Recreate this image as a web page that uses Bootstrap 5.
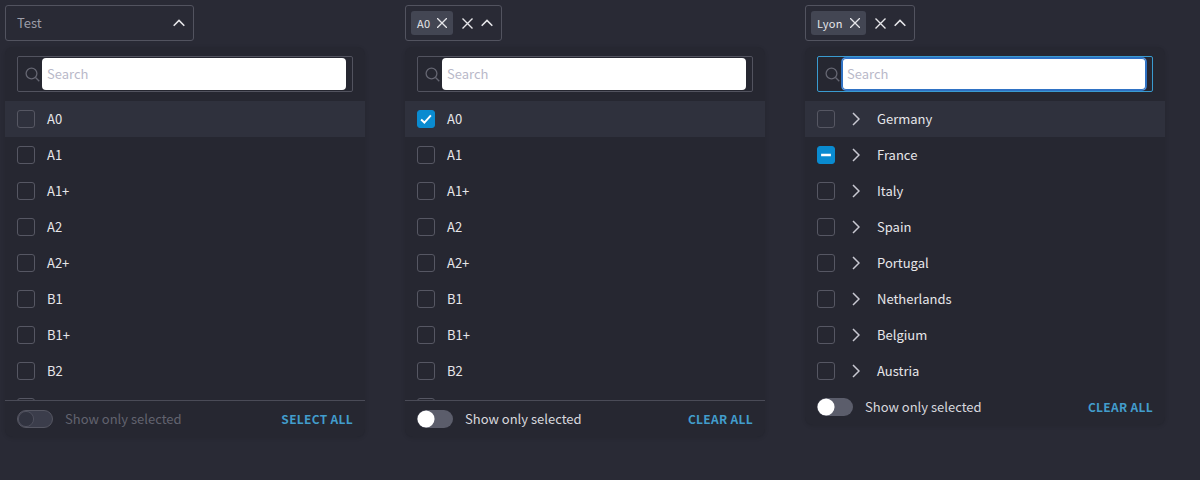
<!DOCTYPE html>
<html>

<head>
  <title>Multi select</title>
  <link href="https://cdn.jsdelivr.net/npm/bootstrap@5.3.2/dist/css/bootstrap.min.css" rel="stylesheet">
  <script src="https://cdn.jsdelivr.net/npm/bootstrap@5.3.2/dist/js/bootstrap.bundle.min.js"></script>
  <style>
    html, body { height: 100%; overflow: hidden; }
    body {
      background: #292a35;
      color: #e6e6ea;
      font-family: "Noto Sans CJK SC", "Noto Sans", sans-serif;
      font-size: 13px;
      padding: 5px;
    }
    .picker-wrap { gap: 40px; }
    .picker-col { width: 360px; }
    .picker-trigger {
      height: 36px;
      border: 1px solid #52535f;
      border-radius: 3px;
      padding: 0 8px 0 5px;
      color: #9c9da8;
    }
    .picker-trigger.is-empty { width: 189px; padding-left: 11px; }
    .picker-chip {
      height: 24px;
      background: #434653;
      color: #e6e6ea;
      border-radius: 3px;
      font-size: 11px;
      letter-spacing: .3px;
      padding: 0 6px;
      margin-right: 9px;
      gap: 7px;
    }
    .picker-panel {
      margin-top: 6px;
      background: #262731;
      border-radius: 8px;
      box-shadow: 0 1px 4px rgba(0, 0, 0, .12);
      overflow: hidden;
    }
    .picker-search {
      height: 36px;
      margin: 9px 12px;
      border: 1px solid #52535f;
      border-radius: 2px;
      padding: 1px 6px 1px 7px;
    }
    .picker-search .form-control {
      height: 32px;
      margin-left: 2px;
      padding: 0 5px 2px;
      border: 0;
      border-radius: 4px;
      font-size: 13px;
    }
    .picker-search .form-control::placeholder { color: #b9b9c9; opacity: 1; }
    .picker-search.is-focused { border-color: #3a9bd0; }
    .picker-search.is-focused .form-control { box-shadow: 0 0 0 1px #2f72c4, inset 0 0 0 1px #2f72c4; }
    .picker-list { height: 299px; overflow: hidden; }
    .picker-list.is-short { height: 288px; }
    .picker-row { height: 36px; padding: 0 12px; }
    .picker-row.is-hover { background: #2f313d; }
    .picker-row .form-check-input {
      width: 18px;
      height: 18px;
      margin: 0 12px 0 0;
      background-color: transparent;
      border: 1px solid #565763;
      border-radius: 3px;
      flex-shrink: 0;
    }
    .picker-row .form-check-input:checked {
      background-color: #0a8bd0;
      border-color: #0a8bd0;
      background-image: url("data:image/svg+xml,%3csvg xmlns='http://www.w3.org/2000/svg' viewBox='0 0 18 18'%3e%3cpath fill='none' stroke='%23fff' stroke-width='2.2' d='m3.5 9.5 3.7 3.5 7.3-8'/%3e%3c/svg%3e");
    }
    .picker-row .form-check-input:indeterminate {
      background-color: #0a8bd0;
      border-color: #0a8bd0;
      background-image: url("data:image/svg+xml,%3csvg xmlns='http://www.w3.org/2000/svg' viewBox='0 0 18 18'%3e%3cpath stroke='%23fff' stroke-width='3' d='M3.5 9h11'/%3e%3c/svg%3e");
    }
    .picker-arrow { width: 30px; flex-shrink: 0; padding-left: 5px; }
    .picker-foot { height: 37px; padding: 0 12px; border-top: 1px solid #4a4b57; }
    .picker-foot.no-line { height: 36px; border-top: 0; }
    .picker-foot .form-check-input {
      width: 36px;
      height: 18px;
      margin: 0 12px 0 0;
      background-color: #5b5d6b;
      border: 0;
      background-image: url("data:image/svg+xml,%3csvg xmlns='http://www.w3.org/2000/svg' viewBox='-4 -4 8 8'%3e%3ccircle r='3.8' fill='%23fff'/%3e%3c/svg%3e");
    }
    .picker-foot .form-check-input:disabled {
      opacity: 1;
      background-color: #3b3d4b;
      border: 1px solid #565763;
      background-image: url("data:image/svg+xml,%3csvg xmlns='http://www.w3.org/2000/svg' viewBox='-4 -4 8 8'%3e%3ccircle r='3.8' fill='%23313340' stroke='%23565763' stroke-width='.4'/%3e%3c/svg%3e");
    }
    .picker-foot .form-check-label { opacity: 1; color: #d8d8de; }
    .picker-foot .form-check-input:disabled ~ .form-check-label { opacity: 1; color: #62636f; }
    .picker-action {
      color: #429dcc;
      font-weight: 600;
      font-size: 12px;
      letter-spacing: .3px;
      text-decoration: none;
    }
  </style>
</head>

<body>
  <div class="d-flex picker-wrap">

    <section class="picker-col">
      <div class="picker-trigger is-empty d-flex align-items-center justify-content-between">
        <span>Test</span>
        <svg width="12" height="8" viewBox="0 0 12 8" fill="none" stroke="#e6e6ea" stroke-width="1.6"><path d="M.7 6.7 6 1.4l5.3 5.3"/></svg>
      </div>
      <div class="picker-panel">
        <div class="picker-search d-flex align-items-center">
          <svg width="15" height="15" viewBox="0 0 15 15" fill="none" stroke="#656672" stroke-width="1.3" class="flex-shrink-0"><circle cx="6.5" cy="6.5" r="5.4"/><path d="m10.5 10.5 3.8 3.8"/></svg>
          <input type="text" class="form-control" placeholder="Search">
        </div>
        <div class="picker-list" id="listOne"></div>
        <div class="picker-foot d-flex align-items-center justify-content-between">
          <div class="form-check form-switch d-flex align-items-center p-0 m-0">
            <input class="form-check-input" type="checkbox" id="onlyOne" disabled>
            <label class="form-check-label" for="onlyOne">Show only selected</label>
          </div>
          <a href="#" class="picker-action">SELECT ALL</a>
        </div>
      </div>
    </section>

    <section class="picker-col">
      <div class="picker-trigger d-inline-flex align-items-center">
        <span class="picker-chip d-inline-flex align-items-center">A0
          <svg width="10" height="10" viewBox="0 0 10 10" stroke="#e6e6ea" stroke-width="1.3"><path d="m0 0 10 10M10 0 0 10"/></svg>
        </span>
        <svg width="11" height="11" viewBox="0 0 11 11" stroke="#e6e6ea" stroke-width="1.4" class="me-2"><path d="m.5.5 10 10M10.500.5l-10 10"/></svg>
        <svg width="12" height="8" viewBox="0 0 12 8" fill="none" stroke="#e6e6ea" stroke-width="1.6"><path d="M.7 6.7 6 1.4l5.3 5.3"/></svg>
      </div>
      <div class="picker-panel">
        <div class="picker-search d-flex align-items-center">
          <svg width="15" height="15" viewBox="0 0 15 15" fill="none" stroke="#656672" stroke-width="1.3" class="flex-shrink-0"><circle cx="6.5" cy="6.5" r="5.4"/><path d="m10.5 10.5 3.8 3.8"/></svg>
          <input type="text" class="form-control" placeholder="Search">
        </div>
        <div class="picker-list" id="listTwo"></div>
        <div class="picker-foot d-flex align-items-center justify-content-between">
          <div class="form-check form-switch d-flex align-items-center p-0 m-0">
            <input class="form-check-input" type="checkbox" id="onlyTwo">
            <label class="form-check-label" for="onlyTwo">Show only selected</label>
          </div>
          <a href="#" class="picker-action">CLEAR ALL</a>
        </div>
      </div>
    </section>

    <section class="picker-col">
      <div class="picker-trigger d-inline-flex align-items-center">
        <span class="picker-chip d-inline-flex align-items-center">Lyon
          <svg width="10" height="10" viewBox="0 0 10 10" stroke="#e6e6ea" stroke-width="1.3"><path d="m0 0 10 10M10 0 0 10"/></svg>
        </span>
        <svg width="11" height="11" viewBox="0 0 11 11" stroke="#e6e6ea" stroke-width="1.4" class="me-2"><path d="m.5.5 10 10M10.500.5l-10 10"/></svg>
        <svg width="12" height="8" viewBox="0 0 12 8" fill="none" stroke="#e6e6ea" stroke-width="1.6"><path d="M.7 6.7 6 1.4l5.3 5.3"/></svg>
      </div>
      <div class="picker-panel">
        <div class="picker-search is-focused d-flex align-items-center">
          <svg width="15" height="15" viewBox="0 0 15 15" fill="none" stroke="#656672" stroke-width="1.3" class="flex-shrink-0"><circle cx="6.5" cy="6.5" r="5.4"/><path d="m10.5 10.5 3.8 3.8"/></svg>
          <input type="text" class="form-control" placeholder="Search">
        </div>
        <div class="picker-list is-short" id="listThree"></div>
        <div class="picker-foot no-line d-flex align-items-center justify-content-between">
          <div class="form-check form-switch d-flex align-items-center p-0 m-0">
            <input class="form-check-input" type="checkbox" id="onlyThree">
            <label class="form-check-label" for="onlyThree">Show only selected</label>
          </div>
          <a href="#" class="picker-action">CLEAR ALL</a>
        </div>
      </div>
    </section>

  </div>

  <script>
    // last row is cut off by the footer, only the top of its box shows
    const levels = ["A0", "A1", "A1+", "A2", "A2+", "B1", "B1+", "B2", ""]
    const countries = ["Germany", "France", "Italy", "Spain", "Portugal", "Netherlands", "Belgium", "Austria"]
    const arrow = '<span class="picker-arrow d-flex"><svg width="8" height="14" viewBox="0 0 8 14" fill="none" stroke="#c9c9d2" stroke-width="1.5"><path d="m1 1 6 6-6 6"/></svg></span>'

    function fillList(id, names, checkedName, halfName, withArrow) {
      const list = document.querySelector(id)
      for (let i = 0; i < names.length; i++) {
        const row = document.createElement("div")
        row.className = "picker-row d-flex align-items-center"
        if (i === 0) row.classList.add("is-hover")

        const box = document.createElement("input")
        box.type = "checkbox"
        box.className = "form-check-input"
        box.checked = names[i] === checkedName
        box.indeterminate = names[i] === halfName
        row.appendChild(box)

        if (withArrow) row.insertAdjacentHTML("beforeend", arrow)

        const label = document.createElement("span")
        label.textContent = names[i]
        row.appendChild(label)
        list.appendChild(row)
      }
    }

    fillList("#listOne", levels)
    fillList("#listTwo", levels, "A0")
    fillList("#listThree", countries, null, "France", true)
  </script>
</body>

</html>
